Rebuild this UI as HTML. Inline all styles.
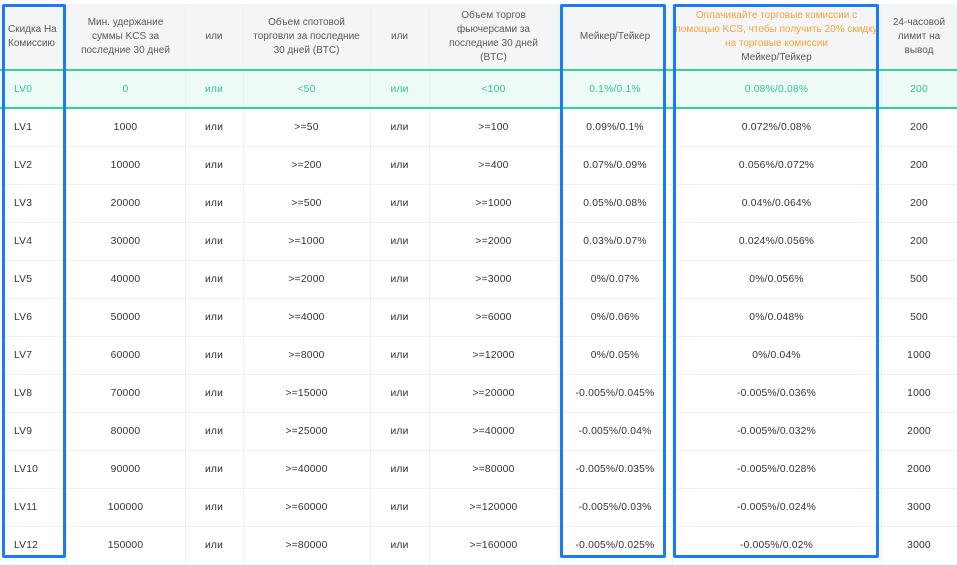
<!DOCTYPE html>
<html><head><meta charset="utf-8"><style>
body{margin:0;width:957px;height:560px;overflow:hidden;background:#fff;font-family:"Liberation Sans","DejaVu Sans",sans-serif;position:relative}
table{position:absolute;left:0;top:4px;border-collapse:collapse;table-layout:fixed;width:957px}
td{text-align:center;font-size:10.3px;color:#333;height:37px;border-right:1px solid #eef0f4;border-bottom:1px solid #eef0f4;padding:0;letter-spacing:0.2px;white-space:nowrap}
td:first-child{text-align:left;padding-left:14px}
tr.h td{height:65px;background:#f4f5f6;color:#595959;line-height:14px;border-bottom:2px solid #2fd39a;font-size:10px;letter-spacing:0}
tr.g td{background:#eefaf5;color:#2fc58e;border-bottom:2px solid #2fd39a;height:36px}
tr.h td:first-child{padding-left:8px}
.o{color:#f7a23b}
.b{position:absolute;border:3px solid #1a7cf5;border-radius:2px;box-sizing:border-box}
</style></head><body>
<table>
<colgroup><col style="width:66px"><col style="width:119px"><col style="width:58px"><col style="width:127px"><col style="width:59px"><col style="width:129px"><col style="width:114px"><col style="width:209px"><col style="width:76px"></colgroup>
<tr class="h"><td>Скидка На<br>Комиссию</td><td>Мин. удержание<br>суммы KCS за<br>последние 30 дней</td><td>или</td><td>Объем спотовой<br>торговли за последние<br>30 дней (BTC)</td><td>или</td><td>Объем торгов<br>фьючерсами за<br>последние 30 дней<br>(BTC)</td><td>Мейкер/Тейкер</td><td><span class="o">Оплачивайте торговые комиссии с<br>помощью KCS, чтобы получить 20% скидку<br>на торговые комиссии</span><br>Мейкер/Тейкер</td><td>24-часовой<br>лимит на<br>вывод</td></tr>
<tr class="g"><td>LV0</td><td>0</td><td>или</td><td>&lt;50</td><td>или</td><td>&lt;100</td><td>0.1%/0.1%</td><td>0.08%/0.08%</td><td>200</td></tr>
<tr><td>LV1</td><td>1000</td><td>или</td><td>&gt;=50</td><td>или</td><td>&gt;=100</td><td>0.09%/0.1%</td><td>0.072%/0.08%</td><td>200</td></tr>
<tr><td>LV2</td><td>10000</td><td>или</td><td>&gt;=200</td><td>или</td><td>&gt;=400</td><td>0.07%/0.09%</td><td>0.056%/0.072%</td><td>200</td></tr>
<tr><td>LV3</td><td>20000</td><td>или</td><td>&gt;=500</td><td>или</td><td>&gt;=1000</td><td>0.05%/0.08%</td><td>0.04%/0.064%</td><td>200</td></tr>
<tr><td>LV4</td><td>30000</td><td>или</td><td>&gt;=1000</td><td>или</td><td>&gt;=2000</td><td>0.03%/0.07%</td><td>0.024%/0.056%</td><td>200</td></tr>
<tr><td>LV5</td><td>40000</td><td>или</td><td>&gt;=2000</td><td>или</td><td>&gt;=3000</td><td>0%/0.07%</td><td>0%/0.056%</td><td>500</td></tr>
<tr><td>LV6</td><td>50000</td><td>или</td><td>&gt;=4000</td><td>или</td><td>&gt;=6000</td><td>0%/0.06%</td><td>0%/0.048%</td><td>500</td></tr>
<tr><td>LV7</td><td>60000</td><td>или</td><td>&gt;=8000</td><td>или</td><td>&gt;=12000</td><td>0%/0.05%</td><td>0%/0.04%</td><td>1000</td></tr>
<tr><td>LV8</td><td>70000</td><td>или</td><td>&gt;=15000</td><td>или</td><td>&gt;=20000</td><td>-0.005%/0.045%</td><td>-0.005%/0.036%</td><td>1000</td></tr>
<tr><td>LV9</td><td>80000</td><td>или</td><td>&gt;=25000</td><td>или</td><td>&gt;=40000</td><td>-0.005%/0.04%</td><td>-0.005%/0.032%</td><td>2000</td></tr>
<tr><td>LV10</td><td>90000</td><td>или</td><td>&gt;=40000</td><td>или</td><td>&gt;=80000</td><td>-0.005%/0.035%</td><td>-0.005%/0.028%</td><td>2000</td></tr>
<tr><td>LV11</td><td>100000</td><td>или</td><td>&gt;=60000</td><td>или</td><td>&gt;=120000</td><td>-0.005%/0.03%</td><td>-0.005%/0.024%</td><td>3000</td></tr>
<tr><td>LV12</td><td>150000</td><td>или</td><td>&gt;=80000</td><td>или</td><td>&gt;=160000</td><td>-0.005%/0.025%</td><td>-0.005%/0.02%</td><td>3000</td></tr>
</table>
<div class="b" style="left:2px;top:4px;width:64px;height:554px"></div>
<div class="b" style="left:560px;top:4px;width:106px;height:554px"></div>
<div class="b" style="left:673px;top:4px;width:206px;height:554px"></div>
</body></html>
